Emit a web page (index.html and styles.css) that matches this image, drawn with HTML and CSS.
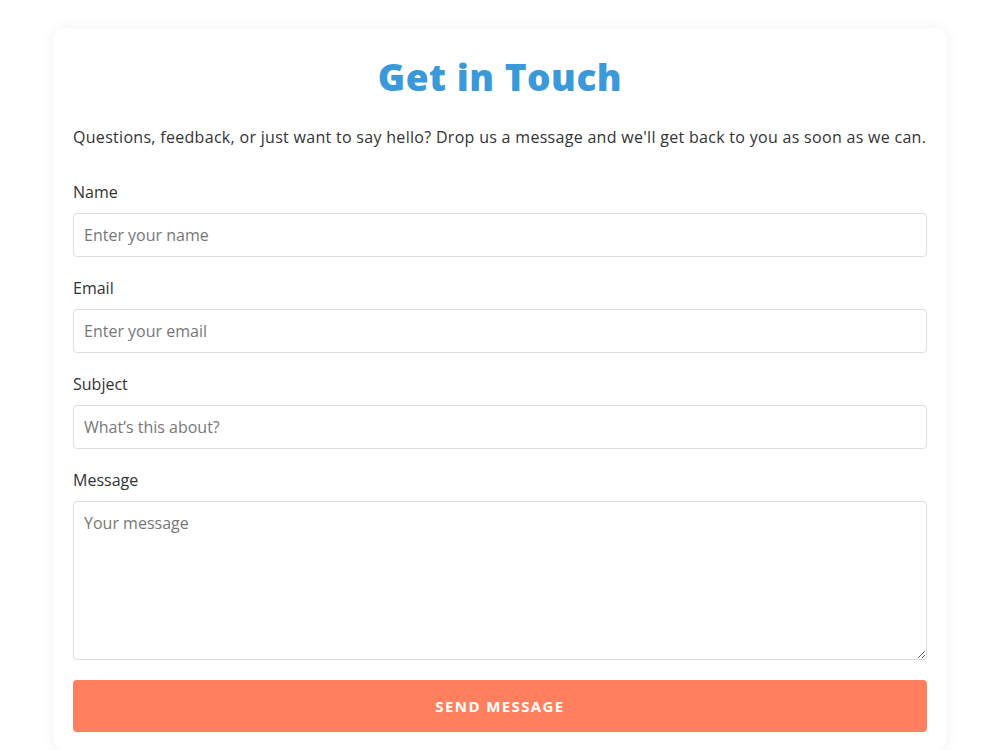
FILE: index.html
```html
<!DOCTYPE html>
<html lang="en">
<head>
    <meta charset="UTF-8">
    <meta name="viewport" content="width=device-width, initial-scale=1.0">
    <title>Get in Touch</title>
    <link rel="stylesheet" href="styles.css">
</head>
<body>
    <div class="card">
        <h1 class="title">Get in Touch</h1>
        <p class="intro">Questions, feedback, or just want to say hello? Drop us a message and we'll get back to you as soon as we can.</p>
        <form class="contact-form">
            <div class="field">
                <label for="name">Name</label>
                <input type="text" id="name" placeholder="Enter your name">
            </div>
            <div class="field">
                <label for="email">Email</label>
                <input type="email" id="email" placeholder="Enter your email">
            </div>
            <div class="field">
                <label for="subject">Subject</label>
                <input type="text" id="subject" placeholder="What’s this about?">
            </div>
            <div class="field">
                <label for="message">Message</label>
                <textarea id="message" placeholder="Your message"></textarea>
            </div>
            <button type="submit" class="send">Send Message</button>
        </form>
    </div>
</body>
</html>
```

FILE: styles.css
```css
body {
    margin: 0;
    background-color: #ffffff;
    font-family: "Open Sans", "Liberation Sans", sans-serif;
    color: #333333;
}

/* Card */
.card {
    width: 854px;
    margin: 28px auto 0;
    padding: 27px 20px 18px;
    background-color: #ffffff;
    border-radius: 10px;
    box-shadow: 0 0 14px rgba(0, 0, 0, 0.06);
}

.title {
    margin: 0;
    font-size: 37px;
    line-height: 43px;
    font-weight: 800;
    letter-spacing: 0.5px;
    text-align: center;
    color: #3a9ad9;
}

.intro {
    margin: 27px 0 32px;
    font-size: 16px;
    line-height: 24px;
    letter-spacing: 0.3px;
}

/* Form */
.field {
    display: flex;
    flex-direction: column;
    gap: 10px;
    margin-bottom: 20px;
}

.field label {
    font-size: 16px;
    line-height: 22px;
    color: #333333;
}

.field input,
.field textarea {
    box-sizing: border-box;
    width: 100%;
    height: 44px;
    padding: 10px;
    border: 1px solid #dddddd;
    border-radius: 4px;
    font-family: inherit;
    font-size: 16px;
    color: #333333;
}

.field textarea {
    height: 159px;
    resize: vertical;
}

.field input::placeholder,
.field textarea::placeholder {
    color: #777777;
}

.send {
    width: 100%;
    height: 52px;
    border: none;
    border-radius: 4px;
    background-color: #ff7f5e;
    color: #ffffff;
    font-family: inherit;
    font-size: 15px;
    font-weight: 700;
    letter-spacing: 1.4px;
    text-transform: uppercase;
    cursor: pointer;
}
```
